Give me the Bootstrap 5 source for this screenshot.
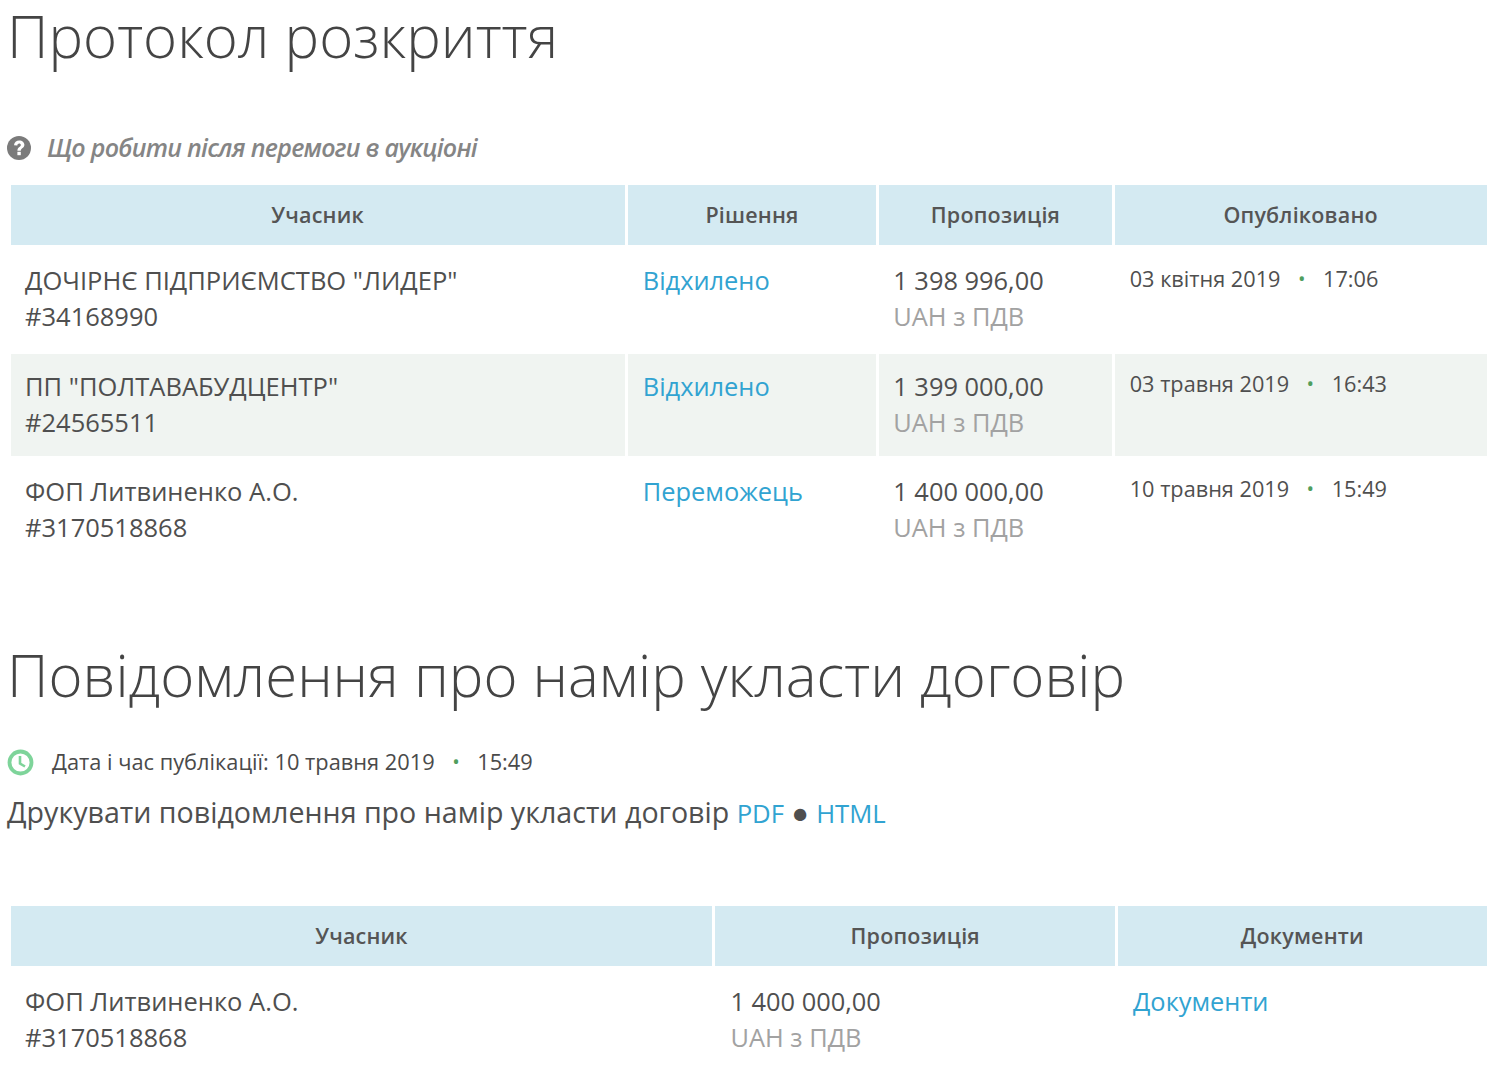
<!DOCTYPE html>
<html lang="uk"><head><meta charset="utf-8">
<link href="https://cdn.jsdelivr.net/npm/bootstrap@5.3.0/dist/css/bootstrap.min.css" rel="stylesheet">
<style>
html,body{margin:0;background:#fff;overflow:hidden}
body{font-family:"Open Sans","Noto Sans",sans-serif;color:#4a4a4a;height:1073px}
.wrap{padding:0 12px 0 7px}
.ttl{font-family:"Open Sans",sans-serif;font-weight:300;font-size:58.1px;line-height:72px;margin:0;color:#444}
.ttl-a{height:72px}
.help{height:36px;margin-top:58px;font-style:italic;font-weight:600;font-size:25px;letter-spacing:-.73px;color:#858585;gap:16px}
.tb{border-collapse:separate;border-spacing:3.5px 3px;table-layout:fixed;width:1482px;margin:0 0 0 .5px}
.tb1{margin-top:16px}
.tb th{background:#d4eaf2;color:#555;font-weight:600;font-size:21.5px;text-align:center;height:60px;vertical-align:middle;padding:0;letter-spacing:.2px}
.tb td{font-size:25.4px;line-height:36px;padding:14px 15px 16px;vertical-align:top;color:#4f4f4f;height:102px}
.tb td:first-child{padding-left:14.5px;font-size:25.5px}
.tb1 td:nth-child(3){padding-left:14px}
.tb1 tr:nth-child(2) td{padding-bottom:17px;height:103px}
.tb tr.alt td{background:#f0f4f1}
.tb a{color:#31a3d1;text-decoration:none}
.mut{color:#a2a2a2}
.dt{font-size:21.7px;line-height:30px;display:block;padding-top:1px}
.tb1 tr:nth-child(2) .dt{padding-top:2px}
.dot{color:#4f9e5d;font-size:20px;margin:0 17.500px;position:relative;top:-1px}
.ttl-b{margin-top:72px;padding-top:3px}
.pub{font-size:21.8px;height:36px;margin-top:33px;gap:18px}
.prn{font-size:28.6px;line-height:44px;color:#4f4f4f;margin-top:10px}
.prn a{color:#31a3d1;text-decoration:none;font-size:25.7px}
.tb2{margin-top:67px}
</style></head><body>
<div class="wrap">
<h1 class="ttl ttl-a">Протокол розкриття</h1>
<div class="help d-flex align-items-center">
<svg width="24" height="24" viewBox="0 0 24 24"><circle cx="12" cy="12" r="12" fill="#7b7b7b"/><path d="M7 9.300C7.300 6.300 9.300 4.400 12.300 4.400c3 0 5.100 1.900 5.100 4.400 0 3.300-3.600 3.500-3.600 5.900h-3.400c0-3.900 3.400-3.900 3.400-5.800 0-.8-.7-1.400-1.600-1.400-1 0-1.700.7-1.900 1.900z" fill="#fff"/><rect x="10.400" y="15.800" width="3.400" height="3.400" fill="#fff"/></svg>
<span>Що робити після перемоги в аукціоні</span></div>
<table class="tb tb1">
<colgroup><col style="width:613px"><col style="width:248px"><col style="width:232px"><col style="width:371px"></colgroup>
<tr><th>Учасник</th><th>Рішення</th><th>Пропозиція</th><th>Опубліковано</th></tr>
<tr><td>ДОЧІРНЄ ПІДПРИЄМСТВО "ЛИДЕР"<br>#34168990</td><td><a href="#">Відхилено</a></td><td>1 398 996,00<br><span class="mut">UAH з ПДВ</span></td><td><span class="dt">03 квітня 2019<span class="dot">•</span>17:06</span></td></tr>
<tr class="alt"><td>ПП "ПОЛТАВАБУДЦЕНТР"<br>#24565511</td><td><a href="#">Відхилено</a></td><td>1 399 000,00<br><span class="mut">UAH з ПДВ</span></td><td><span class="dt">03 травня 2019<span class="dot">•</span>16:43</span></td></tr>
<tr><td>ФОП Литвиненко А.О.<br>#3170518868</td><td><a href="#">Переможець</a></td><td>1 400 000,00<br><span class="mut">UAH з ПДВ</span></td><td><span class="dt">10 травня 2019<span class="dot">•</span>15:49</span></td></tr>
</table>
<h1 class="ttl ttl-b">Повідомлення про намір укласти договір</h1>
<div class="pub d-flex align-items-center">
<svg width="27" height="27" viewBox="0 0 27 27"><circle cx="13.500" cy="13.500" r="11" fill="none" stroke="#7ed49a" stroke-width="3.800"/><path d="M13 7v7.500l5 3" fill="none" stroke="#7ed49a" stroke-width="2.600"/></svg>
<span>Дата і час публікації: 10 травня 2019<span class="dot">•</span>15:49</span></div>
<div class="prn">Друкувати повідомлення про намір укласти договір <a href="#">PDF</a> ● <a href="#">HTML</a></div>
<table class="tb tb2">
<colgroup><col style="width:701px"><col style="width:399px"><col style="width:368px"></colgroup>
<tr><th>Учасник</th><th>Пропозиція</th><th>Документи</th></tr>
<tr><td>ФОП Литвиненко А.О.<br>#3170518868</td><td>1 400 000,00<br><span class="mut">UAH з ПДВ</span></td><td><a href="#">Документи</a></td></tr>
</table>
</div>
<script src="https://cdn.jsdelivr.net/npm/bootstrap@5.3.0/dist/js/bootstrap.bundle.min.js"></script>
</body></html>
